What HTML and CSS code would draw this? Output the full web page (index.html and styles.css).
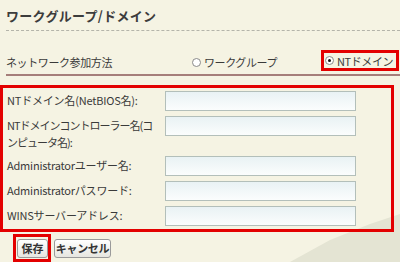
FILE: index.html
```html
<!DOCTYPE html>
<html lang="ja">
<head>
<meta charset="utf-8">
<link rel="stylesheet" href="styles.css">
</head>
<body>
<div class="page">
  <h1 class="title">ワークグループ/ドメイン</h1>
  <div class="method">
    <span class="method-label">ネットワーク参加方法</span>
    <span class="radio-opt radio-wg"><span class="radio"></span>ワークグループ</span>
    <span class="radio-opt radio-hl"><span class="radio checked"></span>NTドメイン</span>
  </div>
  <div class="form-box">
    <div class="row"><label class="lbl">NTドメイン名(NetBIOS名):</label><span class="field"></span></div>
    <div class="row"><label class="lbl lbl-long">NTドメインコントローラー名(コ<br>ンピュータ名):</label><span class="field"></span></div>
    <div class="row"><label class="lbl">Administratorユーザー名:</label><span class="field"></span></div>
    <div class="row"><label class="lbl">Administratorパスワード:</label><span class="field"></span></div>
    <div class="row"><label class="lbl">WINSサーバーアドレス:</label><span class="field"></span></div>
  </div>
  <div class="buttons">
    <span class="btn-hl"><button class="btn btn-save">保存</button></span>
    <button class="btn btn-cancel">キャンセル</button>
  </div>
</div>
</body>
</html>
```
FILE: styles.css
```css
html, body {
  margin: 0;
  padding: 0;
}
body {
  width: 400px;
  height: 262px;
  overflow: hidden;
  background: #f5f3e3;
  font-family: "Noto Sans CJK JP", "DejaVu Sans", sans-serif;
  color: #3a3a3a;
  position: relative;
}
body::before {
  content: "";
  position: absolute;
  left: 0;
  top: 0;
  width: 400px;
  height: 262px;
  background: #e4e4d3;
  clip-path: polygon(290px 262px, 330px 240px, 370px 224px, 400px 214px, 400px 262px);
  z-index: 0;
}
.page {
  position: relative;
  z-index: 1;
}
.title {
  margin: 0 0 0 6px;
  padding: 6px 0 4px;
  font-size: 13px;
  line-height: 20px;
  font-weight: bold;
  color: #3c3c3c;
  border-bottom: 1px dashed #b4b4aa;
  white-space: nowrap;
  letter-spacing: 0.3px;
}
.method {
  margin: 20px 0 0 6px;
  height: 23px;
  border-bottom: 2px solid #a57e7a;
  display: flex;
  align-items: flex-start;
  font-size: 11px;
  letter-spacing: -0.4px;
  white-space: nowrap;
}
.method-label {
  padding-top: 3px;
  line-height: 16px;
  width: 186px;
  flex: none;
}
.radio-opt {
  display: flex;
  align-items: center;
  line-height: 16px;
  padding-top: 3px;
  flex: none;
}
.radio-wg {
  width: 129px;
}
.radio {
  width: 7px;
  height: 7px;
  border: 1px solid #8a8a8a;
  border-radius: 50%;
  background: #fff;
  margin-right: 3px;
  position: relative;
  flex: none;
}
.radio.checked::after {
  content: "";
  position: absolute;
  left: 2px;
  top: 2px;
  width: 3px;
  height: 3px;
  border-radius: 50%;
  background: #111;
}
.radio-hl {
  border: 3px solid #e30000;
  padding: 0 2px 0 1px;
  height: 15px;
  margin-top: -1px;
  width: 69px;
  box-sizing: content-box;
}
.form-box {
  margin-top: 9px;
  width: 384px;
  border: 3px solid #e30000;
  padding: 3px 0 3px 4px;
  display: flex;
  flex-direction: column;
  gap: 5px;
}
.row {
  display: flex;
  align-items: flex-start;
}
.lbl {
  width: 158px;
  flex: none;
  font-size: 11px;
  line-height: 17px;
  padding-top: 1px;
  color: #3a3a3a;
  white-space: nowrap;
  letter-spacing: -0.2px;
}
.lbl-long {
  letter-spacing: -1px;
}
.field {
  flex: none;
  width: 189px;
  height: 18px;
  border: 1px solid #b3bfba;
  background: linear-gradient(#e9f2f4, #fbfdfd);
}
.buttons {
  display: flex;
  align-items: center;
  margin: 2px 0 0 13px;
  gap: 3px;
}
.btn-hl {
  border: 3px solid #e30000;
  padding: 2px 0 1px 1px;
  display: flex;
}
.btn {
  font-family: "Noto Sans CJK JP", "DejaVu Sans", sans-serif;
  font-size: 11px;
  font-weight: bold;
  color: #333;
  height: 19px;
  line-height: 15px;
  padding: 0;
  border: 1px solid #9a9a9a;
  border-radius: 3px;
  background: linear-gradient(#ffffff, #e6e6e0);
  white-space: nowrap;
}
.btn-save {
  width: 31px;
}
.btn-cancel {
  width: 57px;
  letter-spacing: -0.3px;
}
```
